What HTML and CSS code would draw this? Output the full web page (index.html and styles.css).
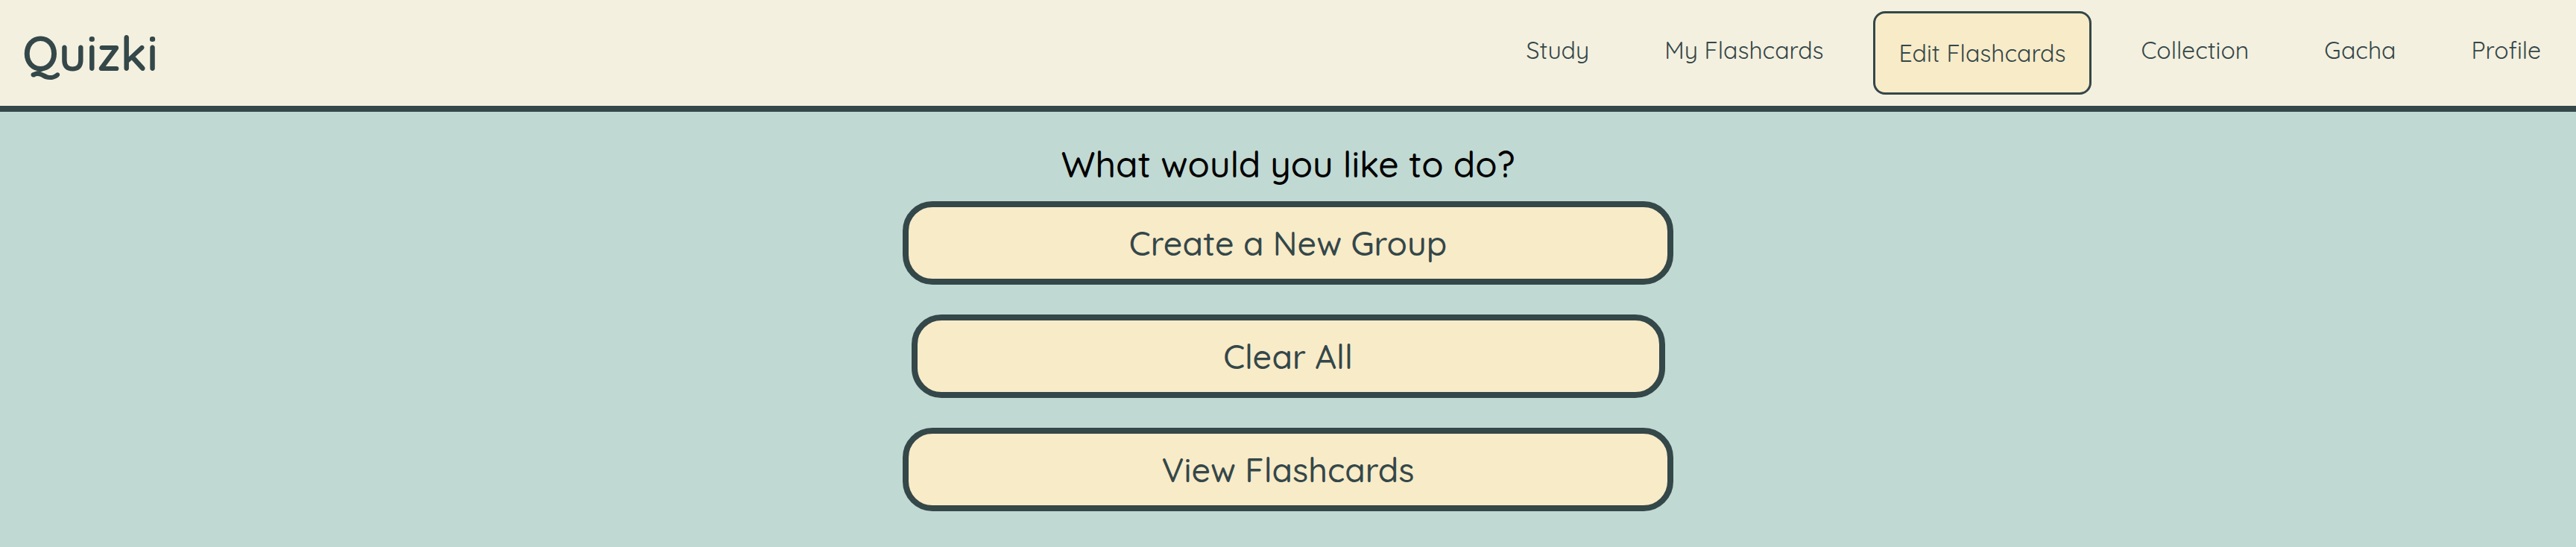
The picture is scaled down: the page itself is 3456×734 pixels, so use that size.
FILE: index.html
```html
<!DOCTYPE html>
<html lang="en">
<head>
<meta charset="utf-8">
<title>Quizki</title>
<link rel="stylesheet" href="styles.css">
</head>
<body>
  <header class="topbar">
    <div class="logo">Quizki</div>
    <nav class="nav">
      <a class="nav-link" href="#">Study</a>
      <a class="nav-link" href="#">My Flashcards</a>
      <a class="nav-link nav-link--active" href="#">Edit Flashcards</a>
      <a class="nav-link" href="#">Collection</a>
      <a class="nav-link" href="#">Gacha</a>
      <a class="nav-link" href="#">Profile</a>
    </nav>
  </header>
  <main class="main">
    <h2 class="prompt">What would you like to do?</h2>
    <div class="actions">
      <button class="action">Create a New Group</button>
      <button class="action action--narrow">Clear All</button>
      <button class="action">View Flashcards</button>
    </div>
  </main>
</body>
</html>
```

FILE: styles.css
```css
html {
  background: #c1d9d3;
}

body {
  margin: 0;
  font-family: "Quicksand", Lato, "Open Sans", sans-serif;
  color: #344749;
  background: #c1d9d3;
}

.topbar {
  height: 142px;
  display: flex;
  align-items: center;
  justify-content: space-between;
  padding: 0 12px 0 30px;
  background: #f4f0df;
  border-bottom: 8px solid #344749;
}

.logo {
  font-size: 64px;
  line-height: 1;
  font-weight: 600;
  color: #344749;
}

.nav {
  display: flex;
  align-items: center;
  gap: 31px;
}

.nav-link {
  height: 112px;
  box-sizing: border-box;
  display: flex;
  align-items: center;
  padding: 0 32px 8px;
  border: 3px solid transparent;
  border-radius: 16px;
  font-size: 32px;
  font-weight: 400;
  color: #344749;
  text-decoration: none;
}

.nav-link--active {
  padding-bottom: 0;
  background: #f8ebc8;
  border-color: #344749;
}

.main {
  padding-top: 41px;
  display: flex;
  flex-direction: column;
  align-items: center;
}

.prompt {
  margin: 0 0 21px;
  font-size: 48px;
  line-height: 58px;
  font-weight: 500;
  color: #000;
}

.actions {
  display: flex;
  flex-direction: column;
  align-items: center;
  gap: 40px;
}

.action {
  width: 1034px;
  height: 112px;
  box-sizing: border-box;
  display: flex;
  align-items: center;
  justify-content: center;
  background: #f8ebc8;
  border: 8px solid #344749;
  border-radius: 40px;
  font-family: inherit;
  font-size: 44.8px;
  font-weight: 500;
  color: #344749;
  cursor: pointer;
}

.action--narrow {
  width: 1011px;
}
```
